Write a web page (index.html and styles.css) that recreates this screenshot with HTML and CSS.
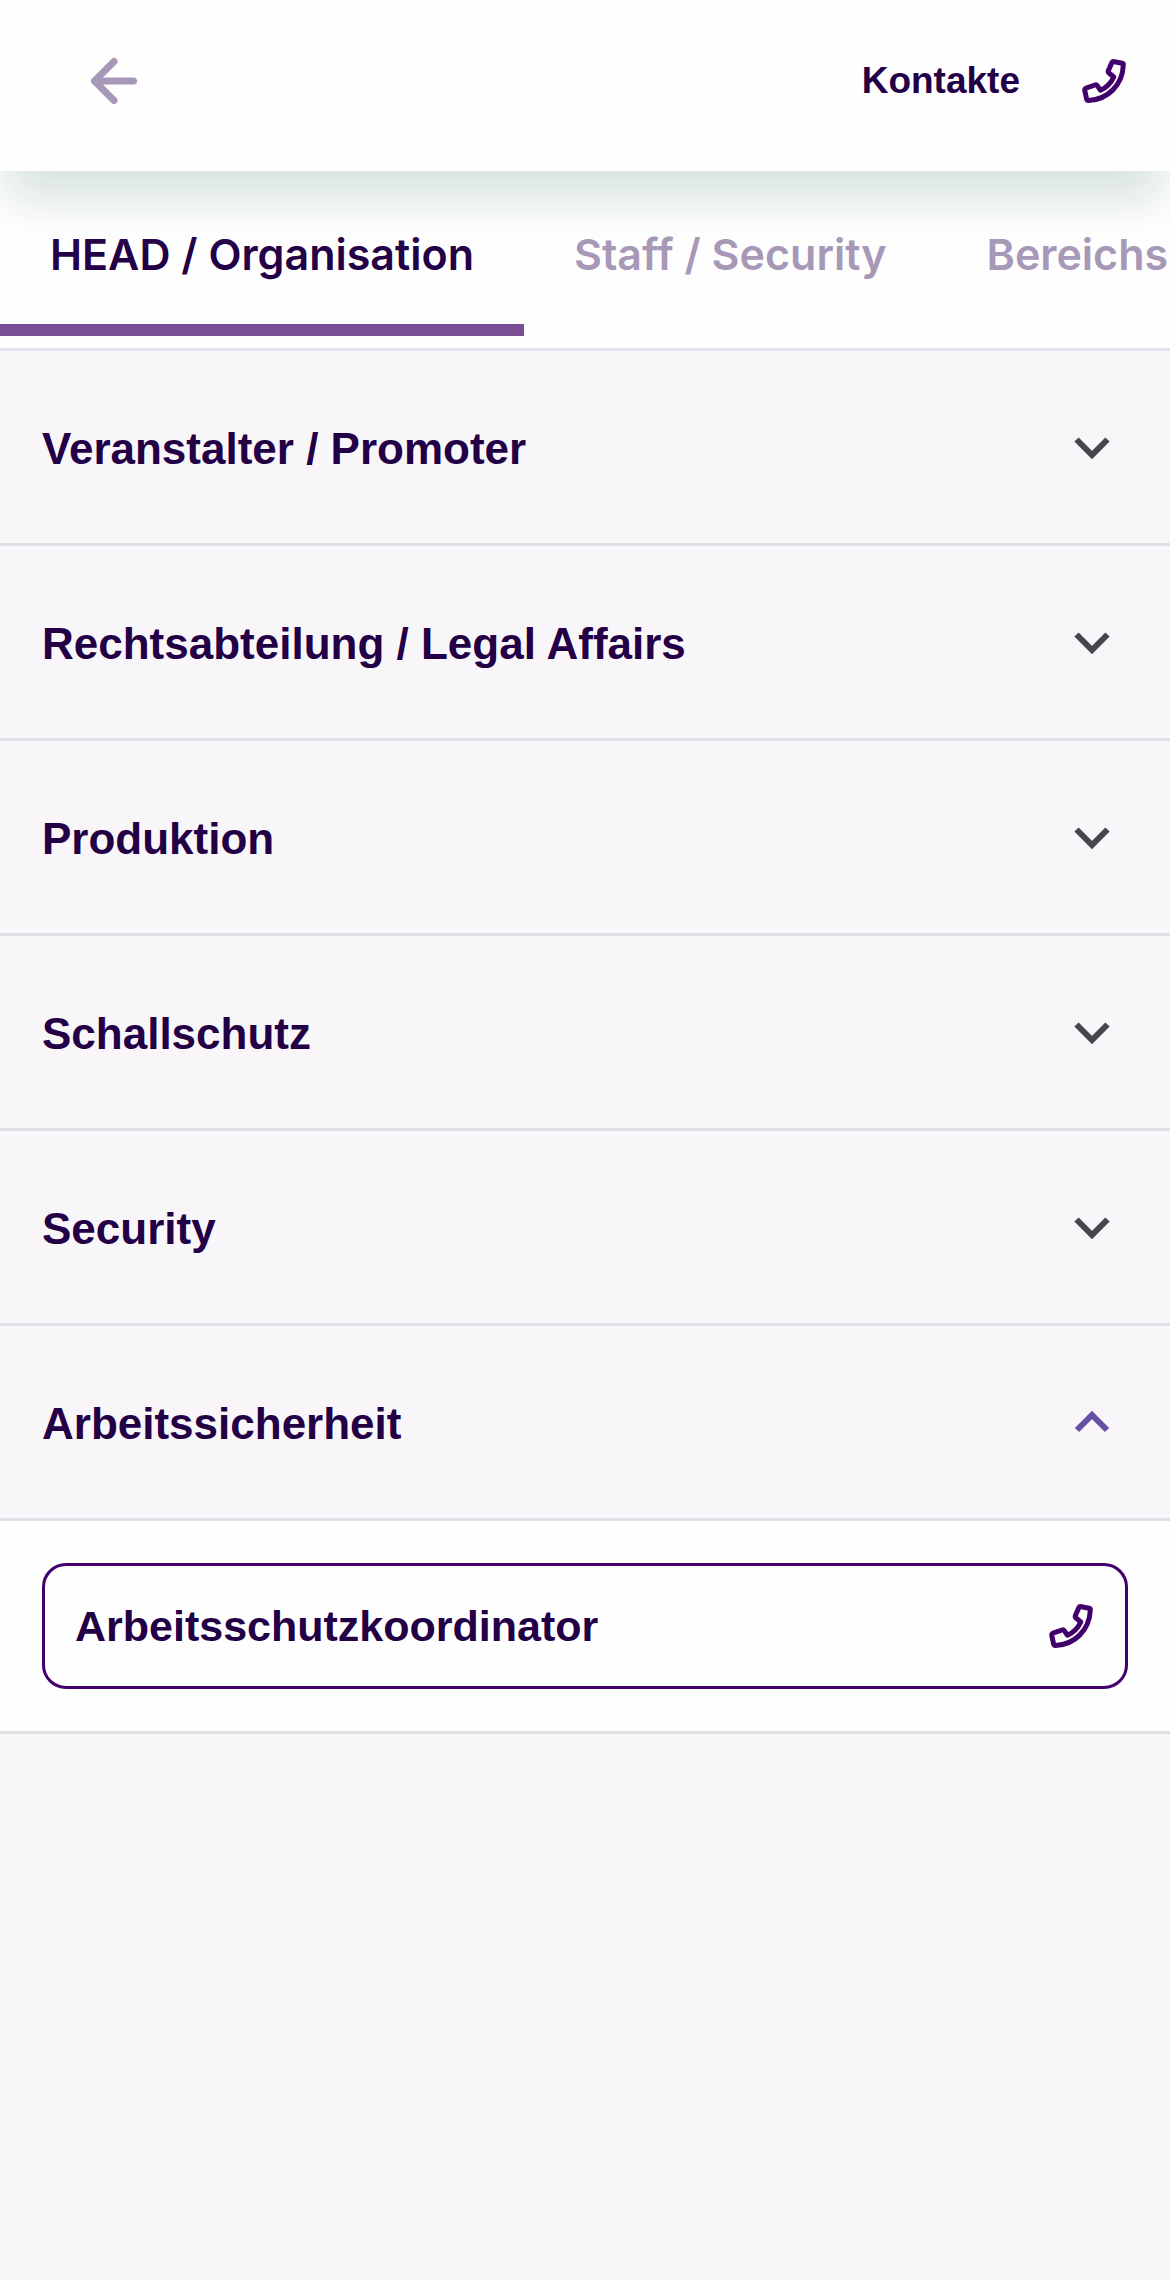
FILE: index.html
```html
<!DOCTYPE html>
<html lang="de">
<head>
  <meta charset="UTF-8" />
  <meta name="viewport" content="width=device-width, initial-scale=1" />
  <title>Kontakte</title>
  <link rel="stylesheet" href="styles.css">
</head>
<body>
  <svg class="sprite" aria-hidden="true">
    <symbol id="phone" viewBox="0 0 48 48">
      <path d="M34.500 4.700L42 6.200Q43.500 6.500 43.300 8C42.500 28 28 42.500 8.500 43.500Q7 43.600 6.600 42L4.800 33.500Q4.500 31.800 6 31.200L15 28Q16.500 27.500 17.400 28.800L20.500 33.300C26.500 30.500 31 26 33.800 20L29 16Q27.800 15 28.400 13.500L31.800 5.700Q32.500 4.300 34.500 4.700Z" />
    </symbol>
    <symbol id="chevron" viewBox="0 0 36 36">
      <path d="M2.500 8.500L18 24L33.500 8.500" />
    </symbol>
    <symbol id="chevron-up" viewBox="0 0 36 36">
      <path d="M3 24L18 9L33 24" />
    </symbol>
  </svg>

  <header class="header">
    <button class="back" type="button" aria-label="Zurück">
      <svg class="icon-back" viewBox="0 0 48 48"><path d="M24 4.500L4.500 24L24 43.500M4.500 24H43.500" /></svg>
    </button>
    <a class="contacts" href="#kontakte">
      Kontakte
      <svg class="icon-phone"><use href="#phone" /></svg>
    </a>
  </header>

  <nav class="tabs" role="tablist">
    <button class="tab active" type="button" role="tab" aria-selected="true">HEAD / Organisation</button>
    <button class="tab" type="button" role="tab" aria-selected="false">Staff / Security</button>
    <button class="tab" type="button" role="tab" aria-selected="false">Bereichs</button>
  </nav>

  <main class="accordion" id="kontakte">
    <button class="row" type="button" aria-expanded="false">
      Veranstalter / Promoter
      <svg class="icon-chevron"><use href="#chevron" /></svg>
    </button>
    <button class="row" type="button" aria-expanded="false">
      Rechtsabteilung / Legal Affairs
      <svg class="icon-chevron"><use href="#chevron" /></svg>
    </button>
    <button class="row" type="button" aria-expanded="false">
      Produktion
      <svg class="icon-chevron"><use href="#chevron" /></svg>
    </button>
    <button class="row" type="button" aria-expanded="false">
      Schallschutz
      <svg class="icon-chevron"><use href="#chevron" /></svg>
    </button>
    <button class="row" type="button" aria-expanded="false">
      Security
      <svg class="icon-chevron"><use href="#chevron" /></svg>
    </button>
    <button class="row open" type="button" aria-expanded="true">
      Arbeitssicherheit
      <svg class="icon-chevron"><use href="#chevron-up" /></svg>
    </button>
    <div class="panel">
      <a class="contact" href="#koordinator">
        Arbeitsschutzkoordinator
        <svg class="icon-phone"><use href="#phone" /></svg>
      </a>
    </div>
  </main>
</body>
</html>
```

FILE: styles.css
```css
* {
  box-sizing: border-box;
}
body {
  margin: 0;
  background: #f8f6f9;
  color: #230046;
  font-family: "Liberation Sans", Arial, sans-serif;
  font-size: 43px;
  font-weight: 600;
  line-height: 48px;
}
button {
  border: 0;
  background: none;
  color: inherit;
  font: inherit;
  cursor: pointer;
}
a {
  color: inherit;
  text-decoration: none;
}
svg {
  flex: none;
  fill: none;
}
.sprite {
  display: none;
}

/* header */
.header {
  position: relative;
  display: flex;
  align-items: center;
  justify-content: space-between;
  padding: 57px 42px 66px 90px;
  background: #fefefe;
  box-shadow: 0 36px 42px -8px #d8e3dc;
}
.back {
  display: flex;
  padding: 0;
}
.contacts {
  display: flex;
  align-items: center;
  gap: 60px;
  font-size: 37px;
}
.icon-back {
  width: 48px;
  height: 48px;
  stroke: #a698b6;
  stroke-width: 7;
  stroke-linecap: round;
  stroke-linejoin: round;
}
.icon-phone {
  width: 48px;
  height: 48px;
  stroke: #41006b;
  stroke-width: 5;
  stroke-linejoin: round;
}

/* tabs */
.tabs {
  position: relative;
  z-index: -1;
  display: flex;
  overflow: hidden;
  padding-bottom: 12px;
  border-bottom: 3px solid #e4e0ed;
  background: #fefefe;
  font-family: Inter, sans-serif;
}
.tab {
  flex: none;
  padding: 59px 50px 46px;
  border-bottom: 12px solid transparent;
  color: #a698b6;
}
.tab.active {
  border-color: #794e94;
  color: #230046;
}

/* accordion */
.row {
  display: flex;
  align-items: center;
  justify-content: space-between;
  width: 100%;
  padding: 74px 60px 70px 42px;
  border-bottom: 3px solid #e2dfe4;
  font-size: 44px;
  text-align: left;
}
.icon-chevron {
  width: 36px;
  height: 36px;
  stroke: #48454e;
  stroke-width: 6;
}
.open .icon-chevron {
  stroke: #6750a4;
}
.panel {
  padding: 42px;
  border-bottom: 3px solid #e2dfe4;
  background: #fefefe;
}
.contact {
  display: flex;
  align-items: center;
  justify-content: space-between;
  padding: 36px 30px;
  border: 3px solid #41006b;
  border-radius: 24px;
}
```
